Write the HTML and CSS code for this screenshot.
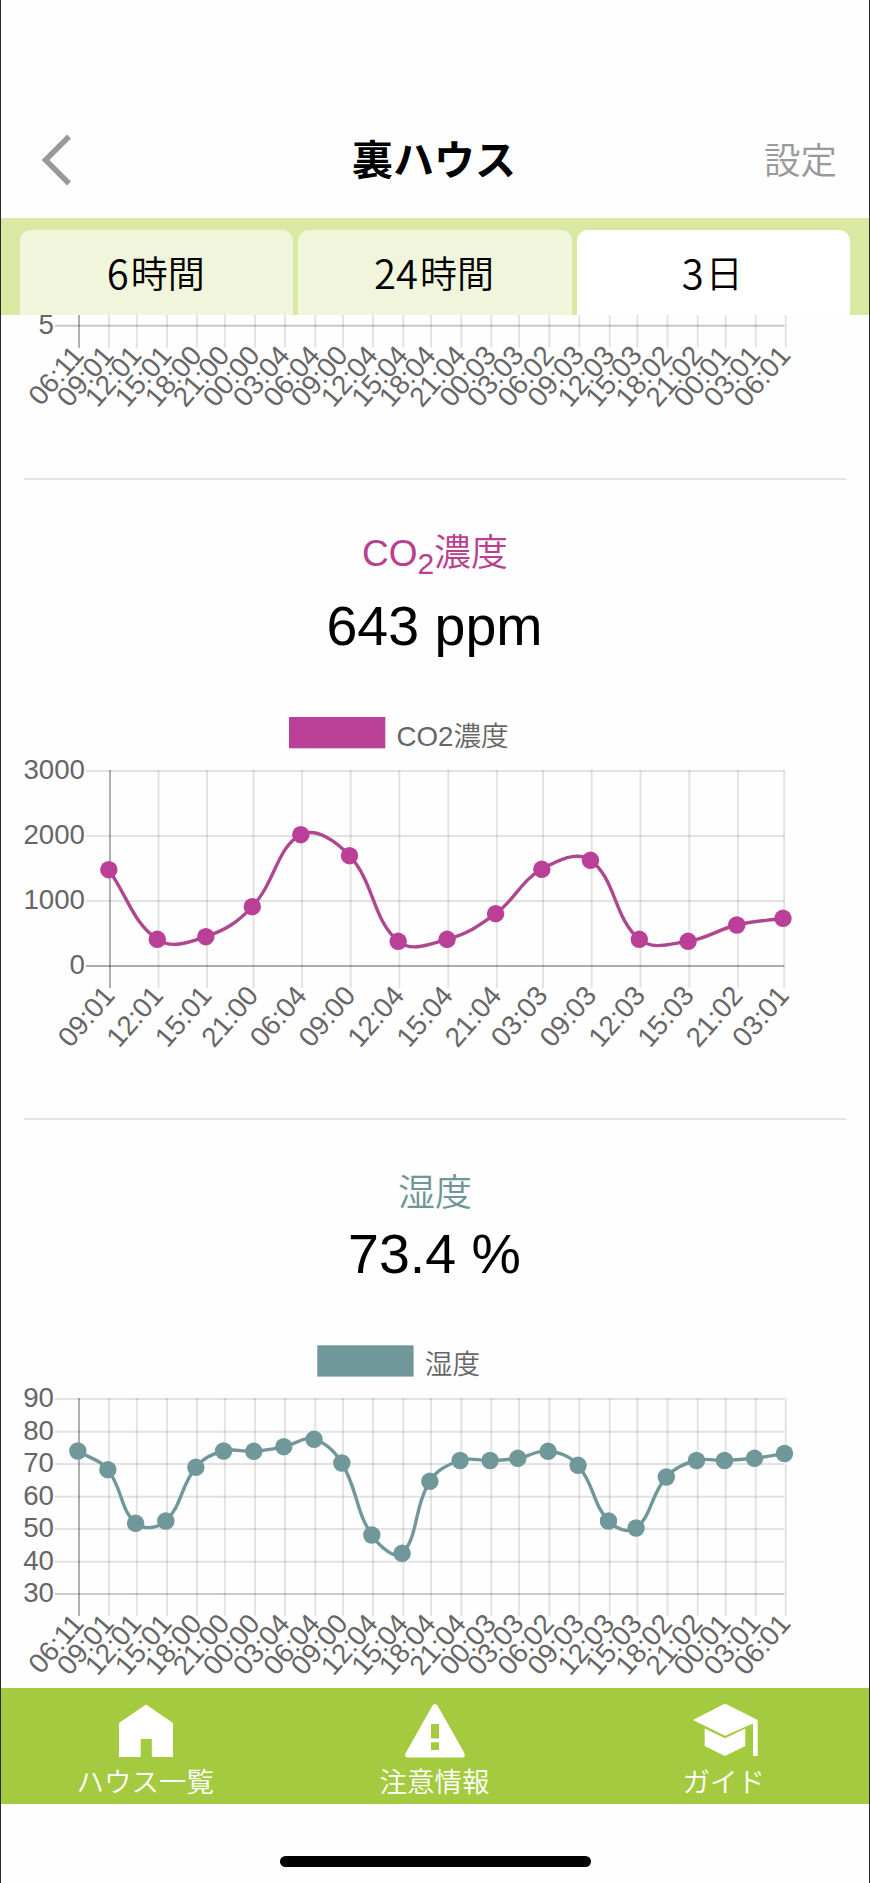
FILE: index.html
```html
<!DOCTYPE html>
<html lang="ja">
<head>
<meta charset="utf-8">
<title>裏ハウス</title>
<link rel="stylesheet" href="styles.css">
</head>
<body>
<div class="app">
  <header class="header">
    <svg class="back" viewBox="0 0 30 52"><path d="M28 2.500 4.500 26 28 49.500"/></svg>
    <h1 class="header-title">裏ハウス</h1>
    <span class="settings">設定</span>
  </header>
  <nav class="tabs">
    <div class="tab"><span class="num">6</span>時間</div>
    <div class="tab"><span class="num">24</span>時間</div>
    <div class="tab tab-active"><span class="num">3</span>日</div>
  </nav>
  <main class="content">
    <section class="panel panel-first">
      <svg class="chart" id="chart-prev" viewBox="1 315 868 163"></svg>
    </section>
    <section class="panel panel-co2">
      <h2 class="name name-co2">CO<sub>2</sub>濃度</h2>
      <p class="value">643 ppm</p>
      <svg class="chart" id="chart-co2" viewBox="1 700 868 418"></svg>
    </section>
    <section class="panel panel-hum">
      <h2 class="name name-hum">湿度</h2>
      <p class="value">73.4 %</p>
      <svg class="chart" id="chart-hum" viewBox="1 1330 868 358"></svg>
    </section>
  </main>
  <footer class="bottom-nav">
    <div class="nav-item">
      <svg class="icon" viewBox="0 0 70 60"><path d="M35 4.500 62 23V57H40.800V39H29.700V57H8V23Z"/></svg>
      <span>ハウス一覧</span>
    </div>
    <div class="nav-item">
      <svg class="icon" viewBox="0 0 70 60"><path fill-rule="evenodd" d="M32.500 5.500Q35 2.500 37.500 5.500L64.300 53Q66 57.500 62 57.500H8Q4 57.500 5.700 53ZM31 24V38.500H39V24ZM31 42.300V50H39V42.300Z"/></svg>
      <span>注意情報</span>
    </div>
    <div class="nav-item">
      <svg class="icon" viewBox="0 0 70 60"><path d="M36 3.500 68.700 20V56H64V23.500L36 35.700 4 20ZM15.700 28.500 36 38.200 56.300 28.500V46L36 56 15.700 46Z"/></svg>
      <span>ガイド</span>
    </div>
  </footer>
  <div class="home"><div class="home-bar"></div></div>
</div>
<script src="charts.js"></script>
</body>
</html>
```
FILE: styles.css
```css
* { box-sizing: border-box; }
body {
  margin: 0;
  background: #fefefe;
  color: #000;
  font-family: "Liberation Sans", "Noto Sans CJK JP", sans-serif;
}
.app {
  display: flex;
  flex-direction: column;
  width: 870px;
  height: 1883px;
  border: solid #2b2b2b;
  border-width: 0 1px;
  overflow: hidden;
}
.header {
  display: grid;
  grid-template-columns: 200px 1fr 200px;
  align-items: center;
  height: 218px;
  padding: 100px 32px 0 40px;
  flex: none;
}
.back { width: 30px; height: 52px; margin-top: 2px; }
.back path { fill: none; stroke: #999; stroke-width: 5.500; }
.header-title {
  margin: 0 10px 5px 0;
  font: bold 41px/60px "Noto Sans CJK JP", sans-serif;
  text-align: center;
}
.settings {
  font: 350 36.500px/60px "Noto Sans CJK JP", sans-serif;
  color: #999;
  text-align: right;
}
.tabs {
  display: grid;
  grid-template-columns: repeat(3, 1fr);
  gap: 5px;
  height: 97px;
  padding: 12px 19px 0;
  background: #dae9a2;
  flex: none;
}
.tab {
  display: flex;
  justify-content: center;
  align-items: center;
  border-radius: 11px 11px 0 0;
  background: #f0f5db;
  font: 350 37px/60px "Noto Sans CJK JP", sans-serif;
  padding: 0 2px 1px 0;
}
.tab-active { background: #fff; }
.num { font-size: 40px; margin-right: 2px; }
.content { height: 1373px; overflow: hidden; flex: none; }
.panel { position: relative; display: flex; flex-direction: column; align-items: center; }
.panel-first { height: 163px; }
.panel-co2 { height: 640px; }
.panel-hum { height: 570px; }
.panel-co2::before, .panel-hum::before {
  content: "";
  width: 822px;
  height: 2px;
  background: #e3e3e3;
  flex: none;
}
.name {
  margin: 44px 0 0;
  height: 60px;
  font-weight: 350;
  font-size: 37px;
  line-height: 60px;
  white-space: nowrap;
}
.name sub { font-size: 30px; line-height: 0; vertical-align: -8px; }
.name-co2 { color: #b8408f; }
.name-hum { color: #719698; }
.value {
  margin: 10px 1px 0 0;
  height: 64px;
  font-size: 55.500px;
  line-height: 64px;
}
.panel-hum .value { margin-top: -2px; }
.chart { display: block; width: 868px; margin-top: auto; flex: none; }
#chart-prev { height: 163px; }
#chart-co2 { height: 418px; }
#chart-hum { height: 358px; }
.chart text {
  fill: #666;
  font-family: "Liberation Sans", "Noto Sans CJK JP", sans-serif;
  font-size: 27.700px;
  font-weight: 350;
}
.bottom-nav {
  display: grid;
  grid-template-columns: repeat(3, 1fr);
  height: 116px;
  background: #a4ca3f;
  flex: none;
}
.nav-item {
  display: flex;
  flex-direction: column;
  align-items: center;
  padding-top: 12px;
  color: #fff;
  font: 350 27.500px/40px "Noto Sans CJK JP", sans-serif;
}
.icon { width: 70px; height: 60px; fill: #fff; flex: none; }
.nav-item span { margin-right: 1px; }
.home { flex: 1; display: flex; justify-content: center; padding-top: 52px; }
.home-bar { width: 311px; height: 11px; border-radius: 6px; background: #000; }
```
FILE: charts.js
```js
const NS = 'http://www.w3.org/2000/svg';

function add(svg, tag, attrs, text) {
  const el = document.createElementNS(NS, tag);
  for (const k in attrs) el.setAttribute(k, attrs[k]);
  if (text !== undefined) el.textContent = text;
  svg.appendChild(el);
}

// Smooth curve whose control points follow the neighbouring points.
function curve(pts, tension) {
  let d = `M${pts[0][0]} ${pts[0][1]}`;
  const ctl = pts.map((p, i) => {
    const a = pts[i - 1] || p, b = pts[i + 1] || p;
    const d1 = Math.hypot(p[0] - a[0], p[1] - a[1]);
    const d2 = Math.hypot(b[0] - p[0], b[1] - p[1]);
    const f1 = tension * d1 / (d1 + d2), f2 = tension * d2 / (d1 + d2);
    const dx = b[0] - a[0], dy = b[1] - a[1];
    return [p[0] - f1 * dx, p[1] - f1 * dy, p[0] + f2 * dx, p[1] + f2 * dy];
  });
  for (let i = 1; i < pts.length; i++) {
    d += `C${ctl[i - 1][2]} ${ctl[i - 1][3]} ${ctl[i][0]} ${ctl[i][1]} ${pts[i][0]} ${pts[i][1]}`;
  }
  return d;
}

function draw(id, o) {
  const svg = document.getElementById(id);
  const bottom = o.rows[o.rows.length - 1][1];
  const left = o.xs[0], right = 784.300;
  o.rows.forEach(([label, y], i) => {
    const last = i === o.rows.length - 1;
    add(svg, 'line', { x1: left - 24, x2: right, y1: y, y2: y, stroke: '#000',
      'stroke-opacity': last ? o.baseOpacity : 0.110, 'stroke-width': 1.900 });
    add(svg, 'text', { x: left - 25, y: y + 8.300, 'text-anchor': 'end' }, label);
  });
  o.xs.forEach((x, i) => {
    add(svg, 'line', { x1: x, x2: x, y1: o.top, y2: bottom + 22, stroke: '#000',
      'stroke-opacity': i ? 0.110 : 0.330, 'stroke-width': 1.900 });
    add(svg, 'text', { transform: `translate(${x} ${bottom + 24.500}) rotate(-49)`,
      x: -0.500, y: 8.500, 'text-anchor': 'end' }, o.labels[i]);
  });
  if (!o.ys) return;
  const pts = o.ys.map((y, i) => [o.xs[i] - 1.200, y]);
  add(svg, 'path', { d: curve(pts, 0.400), fill: 'none', stroke: o.line, 'stroke-width': 3.400 });
  pts.forEach(p => add(svg, 'circle', { cx: p[0], cy: p[1], r: 8.700, fill: o.color }));
  add(svg, 'rect', { x: o.legendX, y: o.legendY, width: 96.300, height: 31.300, fill: o.color });
  add(svg, 'text', { x: o.legendX + 107.500, y: o.legendY + 29 }, o.legend);
}

const xs25 = [79, 109, 136.800, 167, 197, 224.800, 255, 285, 315.300, 343, 373, 403.300, 431, 461.300,
  491.300, 519, 549.300, 579.300, 609.700, 637.300, 667.500, 697.700, 725.700, 755.700, 785.700];
const times25 = ['06:11', '09:01', '12:01', '15:01', '18:00', '21:00', '00:00', '03:04', '06:04',
  '09:00', '12:04', '15:04', '18:04', '21:04', '00:03', '03:03', '06:02', '09:03', '12:03',
  '15:03', '18:02', '21:02', '00:01', '03:01', '06:01'];

draw('chart-prev', { xs: xs25, labels: times25, top: 300, rows: [['5', 325.700]], baseOpacity: 0.220 });

draw('chart-co2', {
  xs: [110, 158.500, 207, 253.500, 302, 350.700, 399.400, 448.300, 496.800, 543, 591.700, 640.500, 689.300, 738, 784.200],
  labels: ['09:01', '12:01', '15:01', '21:00', '06:04', '09:00', '12:04', '15:04', '21:04',
    '03:03', '09:03', '12:03', '15:03', '21:02', '03:01'],
  ys: [869.700, 939.300, 936.700, 906.700, 834.700, 855.700, 941.300, 939.300, 913.700, 869.300, 860.300, 939.300, 941.300, 925, 918.300],
  top: 770, rows: [['3000', 771], ['2000', 836], ['1000', 901], ['0', 966]], baseOpacity: 0.330,
  color: '#ba3f96', line: '#ae478f', legend: 'CO2濃度', legendX: 289, legendY: 717
});

draw('chart-hum', {
  xs: xs25, labels: times25,
  ys: [1451, 1469.700, 1523.300, 1521, 1467.300, 1451, 1451.300, 1446.700, 1439.300, 1463, 1535, 1553.300, 1481.300,
    1460.500, 1460.500, 1458.300, 1451.300, 1465.300, 1521, 1528, 1477, 1460.500, 1460.500, 1458.300, 1453.500],
  top: 1398, rows: [['90', 1399], ['80', 1431.700], ['70', 1464], ['60', 1496.700], ['50', 1529],
    ['40', 1561.700], ['30', 1594]], baseOpacity: 0.200,
  color: '#709799', line: '#709799', legend: '湿度', legendX: 317.300, legendY: 1345.300
});
```
